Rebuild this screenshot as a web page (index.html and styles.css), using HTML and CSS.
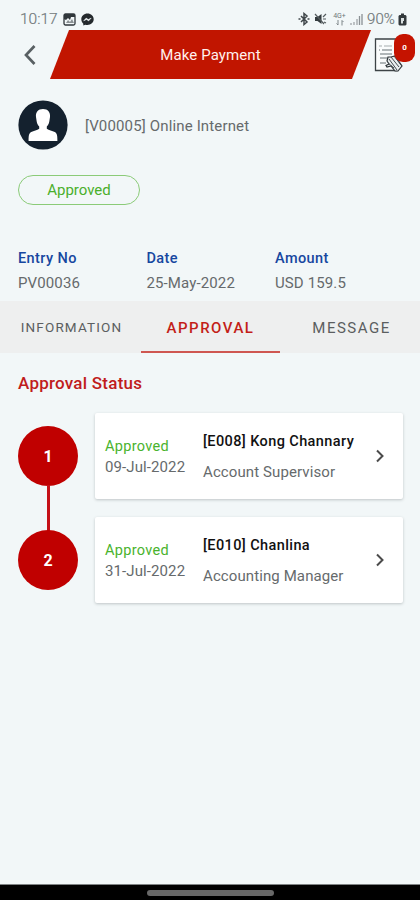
FILE: index.html
```html
<!DOCTYPE html>
<html lang="en">
<head>
<meta charset="utf-8">
<title>Make Payment</title>
<link rel="stylesheet" href="styles.css">
</head>
<body>
<div class="screen">
  <div class="status">
    <span class="clock">10:17</span>
    <svg class="gallery" width="13" height="13" viewBox="0 0 13 13"><rect x="1" y="1" width="11" height="11" rx="1.5" fill="none" stroke="#30373b" stroke-width="1.3"/><path d="M1 1h11v3H8L7 7 5 5 3 7 1 6z" fill="#30373b"/><path d="M3 10l2-3 2 2 2-3 2 4z" fill="#8b9194"/></svg>
    <svg class="messenger" width="13" height="13" viewBox="0 0 13 13"><path d="M6.500.5C3 .5.3 3 .3 6.300c0 1.800.8 3.400 2 4.400V12.500l2-.8c4.400 1.200 8.400-1.500 8.400-5.400C12.700 3 10 .5 6.500.5z" fill="#24292c"/><path d="M2.700 7.800l2.500-2.700 2 1.500 3-1.500-2.600 2.800-2-1.500z" fill="#f2f7f8" stroke="#f2f7f8" stroke-width=".5"/></svg>
    <div class="indicators">
      <svg width="12" height="14" viewBox="0 0 12 14"><path d="M3 4l6 6-3 2.500v-11L9 4 3 10M.5 7h2m7 0h2" fill="none" stroke="#41484b" stroke-width="1.500"/></svg>
      <svg class="mute" width="13" height="14" viewBox="0 0 13 14"><path d="M1 5h2.500L7.500 2v10L3.500 9H1z" fill="#353c3f"/><path d="M1 2l9 10M9 5l3-3M9 7h3M10 10l2 1" stroke="#555c5f" stroke-width="1.200"/></svg>
      <span class="network"><b>4G+</b><svg width="8" height="6" viewBox="0 0 8 6"><path d="M2 0v5L.5 3.500M6 5.500V.5L7.500 2" fill="none" stroke="#7f8689"/></svg></span>
      <svg class="signal" width="13" height="13" viewBox="0 0 13 13"><path d="M1 12v-2M4 12V9M7 12V6" stroke="#a0a6a8" stroke-width="1.300"/><path d="M9.500 12V3M12 12V1" stroke="#8a9194" stroke-width="1.300"/></svg>
      <span class="percent">90%</span>
      <svg class="battery" width="9" height="13" viewBox="0 0 9 13"><path d="M3 .5h3V2h1.500L8.500 3v8.500l-1 1h-6l-1-1V3l1-1H3z" fill="#33393c"/><path d="M3 5h3v3H5v2.500H3z" fill="#d9dfe0"/></svg>
    </div>
  </div>

  <header class="header">
    <svg class="back" width="14" height="22" viewBox="0 0 14 22"><path d="M12.500 2L4 11l8.500 9" fill="none" stroke="#596063" stroke-width="2.700"/></svg>
    <h1 class="banner">Make Payment</h1>
    <div class="document">
      <svg width="30" height="36" viewBox="0 0 30 36"><path d="M23 20v12.500H1.500V1H23" fill="#fafcfc" stroke="#3d4346" stroke-width="1.300"/><path d="M5 8h3M10 8h8" stroke="#a5acae"/><path d="M5 12h1m2 0h10M6 16h12M6 20h7M6 25h6" stroke="#667074" stroke-width="1.200"/><path d="M14 19l-1 4 2 3-3 1.500 1 1.500 4-1 4 5h3l4-5-7-10-4 1z" fill="#e9edee" stroke="#30373a" stroke-width="1.200"/><path d="M15 21l8 11M17 19l8 10M20 18l7 9M14 25l6 5" stroke="#454c50" stroke-width="1"/></svg>
      <span class="badge">0</span>
    </div>
  </header>

  <section class="profile">
    <svg width="50" height="50" viewBox="0 0 50 50"><circle cx="25" cy="25" r="24.600" fill="#14212e"/><path d="M25 9c-5 0-7.500 3.400-7 8l.7 4.500c.3 2.200 1.200 3.800 2.500 5v2.300c-2 1.500-5.500 2-8 3.300-2.300 1.300-2.600 3.500-2.600 9h28.800c0-5.500-.3-7.700-2.600-9-2.500-1.300-6-1.800-8-3.300v-2.300c1.300-1.200 2.200-2.800 2.500-5L32 17c.5-4.600-2-8-7-8z" fill="#fff"/></svg>
    <span class="payee">[V00005] Online Internet</span>
  </section>

  <div class="pill">Approved</div>

  <section class="facts">
    <div><h2>Entry No</h2><p>PV00036</p></div>
    <div><h2>Date</h2><p>25-May-2022</p></div>
    <div><h2>Amount</h2><p>USD 159.5</p></div>
  </section>

  <nav class="tabs">
    <span class="tab small">INFORMATION</span>
    <span class="tab active">APPROVAL</span>
    <span class="tab message">MESSAGE</span>
  </nav>

  <main class="approval">
    <h2 class="heading">Approval Status</h2>
    <div class="step">
      <div class="number linked">1</div>
      <article class="card">
        <div class="result"><span class="ok">Approved</span><span class="date">09-Jul-2022</span></div>
        <div class="person"><strong class="name">[E008] Kong Channary</strong><span>Account Supervisor</span></div>
        <svg width="10" height="14" viewBox="0 0 10 14"><path d="M2 1.500L7.500 7 2 12.500" fill="none" stroke="#4b4b4b" stroke-width="2"/></svg>
      </article>
    </div>
    <div class="step">
      <div class="number">2</div>
      <article class="card">
        <div class="result"><span class="ok">Approved</span><span class="date">31-Jul-2022</span></div>
        <div class="person"><strong class="name">[E010] Chanlina</strong><span>Accounting Manager</span></div>
        <svg width="10" height="14" viewBox="0 0 10 14"><path d="M2 1.500L7.500 7 2 12.500" fill="none" stroke="#4b4b4b" stroke-width="2"/></svg>
      </article>
    </div>
  </main>
  <footer class="system"><span></span></footer>
</div>
</body>
</html>
```
FILE: styles.css
```css
* { box-sizing: border-box; }
body { margin: 0; font-family: Roboto, sans-serif; background: #f2f7f8; color: #666a6c; }
h1, h2, p { margin: 0; }
svg { display: block; flex: none; }
.screen { width: 420px; height: 900px; display: flex; flex-direction: column; overflow: hidden; }
.status { height: 30px; flex: none; display: flex; align-items: center; padding: 8px 13px 0 20px; color: #70777a; font-weight: 300; }
.clock { width: 43px; font-size: 15.500px; line-height: 22px; -webkit-text-stroke: .2px; }
.messenger { margin-left: 5px; }
.indicators { margin-left: auto; display: flex; align-items: center; }
.mute { margin-left: 4px; }
.network { width: 15px; margin-left: 5px; display: flex; flex-direction: column; align-items: center; font-size: 7px; line-height: 7px; }
.network b { font-weight: 400; }
.signal { margin-left: 3px; }
.percent { width: 29px; margin-left: 4px; font-size: 15px; line-height: 22px; letter-spacing: .1px; -webkit-text-stroke: .2px; }
.battery { margin-left: 2px; }
.header { height: 49px; flex: none; display: flex; align-items: center; padding-left: 22px; }
.banner { width: 321px; height: 49px; margin-left: 14px; clip-path: polygon(19px 0, 100% 0, 302px 100%, 0 100%); background: #c11500; color: #fff0ed; font-size: 15px; font-weight: 400; line-height: 50px; text-align: center; letter-spacing: .1px; }
.document { position: relative; margin: 2px 0 0 3px; }
.badge { position: absolute; left: 20px; top: -4px; width: 21px; height: 28px; border-radius: 9px; background: #c51300; color: #fff; font-size: 8px; font-weight: 700; line-height: 28px; text-align: center; }
.profile { height: 50px; flex: none; margin: 21px 18px 0; display: flex; align-items: center; gap: 17px; }
.payee { font-size: 15px; line-height: 20px; padding-top: 2px; letter-spacing: .15px; }
.pill { width: 122px; height: 30px; flex: none; margin: 25px 0 0 18px; border: 1px solid #8bcb78; border-radius: 15px; color: #4aaf2c; font-size: 15px; line-height: 29px; text-align: center; }
.facts { height: 96px; flex: none; display: grid; grid-template-columns: repeat(3, 128.500px); align-content: start; padding: 41px 0 0 18px; font-size: 15px; line-height: 22px; letter-spacing: .12px; }
.facts h2 { color: #1747a0; font-size: 14.500px; font-weight: 500; line-height: 26px; letter-spacing: .4px; }
.tabs { height: 52px; flex: none; display: grid; grid-template: 52px / 141px 139px 140px; background: #eeefef; }
.tab { text-align: center; font-size: 15px; line-height: 54px; letter-spacing: 1.500px; color: #5b5e60; }
.small { padding-left: 2px; font-size: 13.500px; line-height: 53px; letter-spacing: 1.150px; }
.message { padding-left: 3px; }
.active { color: #c31e18; font-weight: 500; border-bottom: 2px solid #cf5751; }
.approval { flex: 1; padding: 17px 17px 0 18px; }
.heading { color: #c01c1c; font-size: 17px; font-weight: 500; line-height: 26px; letter-spacing: .25px; }
.step { display: flex; align-items: center; justify-content: space-between; height: 86px; margin-top: 17px; }
.step + .step { margin-top: 18px; }
.number { position: relative; width: 60px; height: 60px; border-radius: 50%; background: #c00000; color: #fff; font-size: 16px; font-weight: 700; line-height: 61px; text-align: center; }
.linked::after { content: ""; position: absolute; left: 29px; top: 59px; width: 3px; height: 46px; background: #c51018; }
.card { width: 308px; height: 86px; display: flex; align-items: center; padding: 0 18px 0 10px; border-radius: 2px; background: #fff; box-shadow: 0 1px 3px #bec4c6; font-size: 15px; letter-spacing: .1px; }
.result, .person { display: flex; flex-direction: column; align-items: flex-start; }
.result { width: 98px; line-height: 20px; padding-top: 2px; }
.ok { color: #49b32d; font-size: 14.500px; letter-spacing: .3px; }
.person { flex: 1; line-height: 28px; }
.name { color: #111; font-size: 14.500px; font-weight: 500; line-height: 32px; white-space: nowrap; letter-spacing: .4px; }
.system { height: 16px; flex: none; display: flex; justify-content: center; padding-top: 5px; background: #000; border-top: 1px solid #7f8384; }
.system span { width: 127px; height: 6px; border-radius: 3px; background: #686868; }
```
